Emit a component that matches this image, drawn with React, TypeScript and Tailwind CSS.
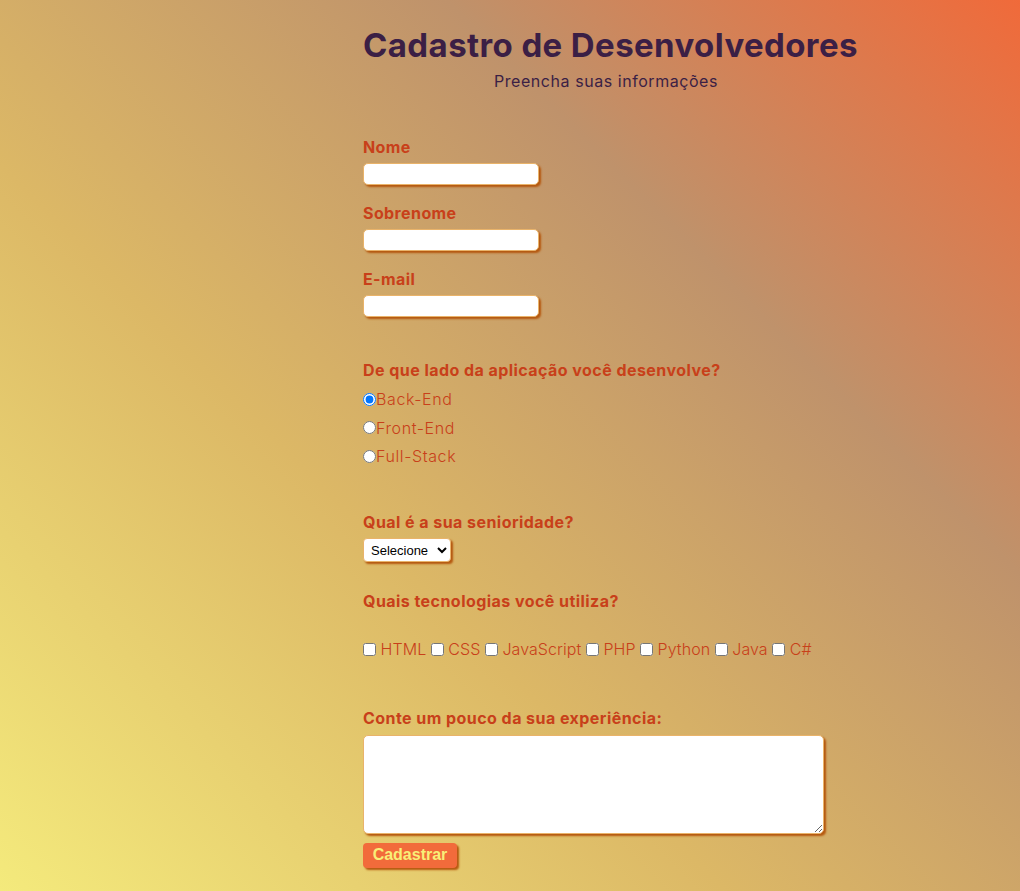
export default function App() {
  const techs = ["HTML", "CSS", "JavaScript", "PHP", "Python", "Java", "C#"];

  return (
    <div className="min-h-screen bg-[linear-gradient(45deg,#f4ea7c_0%,#dcb866_38%,#bf926b_70%,#f06a3a_100%)] font-['Inter',sans-serif]">
      <div className="ml-[363px] w-[494px] pt-[25px]">
        {/* Cabeçalho */}
        <h1 className="text-[33px] font-bold leading-[40px] tracking-[0.4px] text-[#3b1f45] whitespace-nowrap">
          Cadastro de Desenvolvedores
        </h1>
        <p className="mt-[4px] pr-[8px] text-center text-[16px] leading-[24px] tracking-[0.55px] text-[#3b1f45]">
          Preencha suas informações
        </p>

        <form className="mt-[42px] flex flex-col text-[#c8401a]" onSubmit={(e) => e.preventDefault()}>
          {/* Dados pessoais */}
          {["Nome", "Sobrenome", "E-mail"].map((label, i) => (
            <div key={label} className={i > 0 ? "mt-[16px]" : ""}>
              <label className="block text-[16px] font-bold leading-[24px] tracking-[0.4px]">{label}</label>
              <input
                type={label === "E-mail" ? "email" : "text"}
                className="mt-[4px] block h-[22px] w-[176px] rounded-[5px] border border-[#e9b36a] bg-white shadow-[2px_2px_2px_#b5580f] outline-none"
              />
            </div>
          ))}

          {/* Lado da aplicação */}
          <label className="mt-[41px] block text-[16px] font-bold leading-[24px] tracking-[0.45px]">
            De que lado da aplicação você desenvolve?
          </label>
          <div className="mt-[3px] text-[16px] font-light leading-[28.5px] tracking-[0.6px]">
            {["Back-End", "Front-End", "Full-Stack"].map((op, i) => (
              <div key={op} className="flex items-center">
                <input type="radio" name="lado" defaultChecked={i === 0} className="m-0" />
                <span>{op}</span>
              </div>
            ))}
          </div>

          {/* Senioridade */}
          <label className="mt-[39px] block text-[16px] font-bold leading-[24px] tracking-[0.45px]">
            Qual é a sua senioridade?
          </label>
          <div className="mt-[3px]">
            <select className="h-[24px] w-[88px] rounded-[4px] border border-[#e9b36a] bg-white pl-[3px] font-['Arial',sans-serif] text-[13px] text-black shadow-[2px_2px_2px_#b5580f]">
              <option>Selecione</option>
              <option>Júnior</option>
              <option>Pleno</option>
              <option>Sênior</option>
            </select>
          </div>

          {/* Tecnologias */}
          <label className="mt-[27px] block text-[16px] font-bold leading-[24px] tracking-[0.45px]">
            Quais tecnologias você utiliza?
          </label>
          <div className="mt-[24px] text-[16px] font-light leading-[24px] tracking-[0.05px]">
            {techs.map((t) => (
              <span key={t}>
                <input type="checkbox" className="m-0 align-[-1px]" /> {t}{" "}
              </span>
            ))}
          </div>

          {/* Experiência */}
          <label className="mt-[45px] block text-[16px] font-bold leading-[24px] tracking-[0.45px]">
            Conte um pouco da sua experiência:
          </label>
          <textarea className="mt-[5px] block h-[99px] w-[461px] rounded-[5px] border border-[#e9b36a] bg-white shadow-[2px_2px_2px_#b5580f] outline-none" />

          <div className="mt-[8px] pb-[24px]">
            <button
              type="submit"
              className="h-[25px] w-[94px] rounded-[4px] bg-[#f26b3b] font-['Arial',sans-serif] text-[16px] font-bold text-[#f8ef78] shadow-[2px_2px_2px_#b5580f]"
            >
              Cadastrar
            </button>
          </div>
        </form>
      </div>
    </div>
  );
}
